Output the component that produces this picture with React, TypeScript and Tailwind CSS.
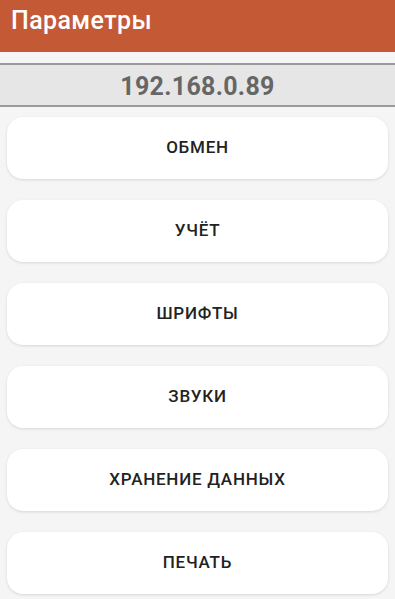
const items = ['ОБМЕН', 'УЧЁТ', 'ШРИФТЫ', 'ЗВУКИ', 'ХРАНЕНИЕ ДАННЫХ', 'ПЕЧАТЬ'];

export default function App() {
  return (
    <div className="h-[599px] w-[395px] overflow-hidden bg-[#f5f5f5]" style={{ fontFamily: 'Roboto, "Noto Sans", sans-serif' }}>
      <div className="flex h-[52px] items-center bg-[#c45a35] pl-[11px] pb-[10px]">
        <span className="text-[25px] font-medium tracking-[0.4px] text-white">Параметры</span>
      </div>
      <div className="mt-[11px] flex h-[44px] items-center justify-center border-y-2 border-[#9a9a9a] bg-[#e6e6e6] pt-[3px]">
        <span className="text-[25px] font-bold tracking-[0.3px] text-[#666666]">192.168.0.89</span>
      </div>
      <div className="flex flex-col gap-[21px] px-[7px] pt-[10px]">
        {items.map(label => (
          <div
            key={label}
            className="flex h-[62px] items-center justify-center rounded-[16px] bg-white shadow-[0_1px_3px_rgba(0,0,0,0.12)]"
          >
            <span className="text-[17px] font-medium tracking-[0.75px] text-[#222222]">{label}</span>
          </div>
        ))}
      </div>
    </div>
  );
}
